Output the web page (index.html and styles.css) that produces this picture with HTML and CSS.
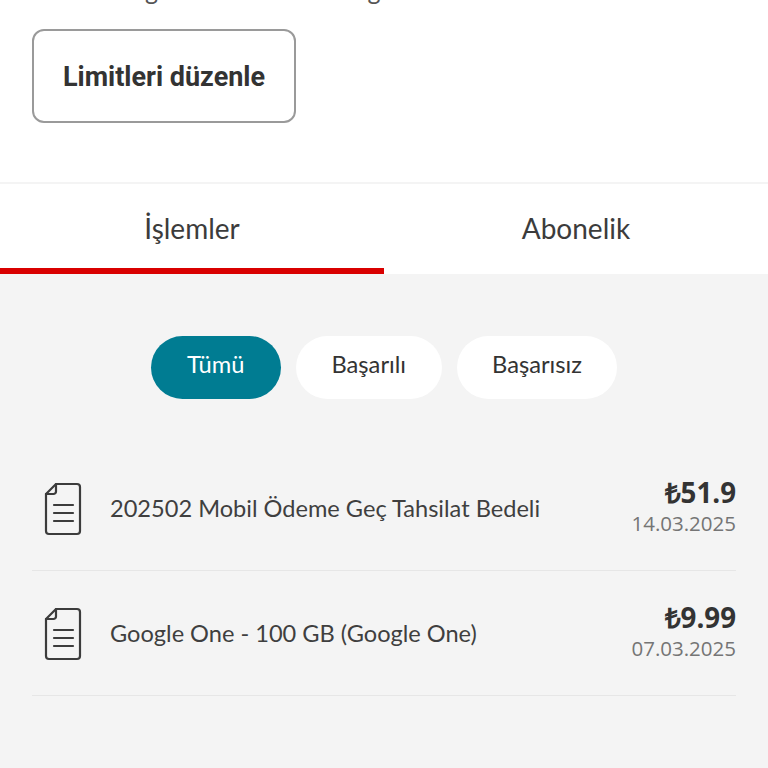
FILE: index.html
```html
<!DOCTYPE html>
<html lang="tr">
<head>
    <meta charset="UTF-8">
    <meta name="viewport" content="width=device-width, initial-scale=1.0">
    <title>Mobil Ödeme</title>
    <link rel="stylesheet" href="styles.css">
</head>
<body>
    <section class="limits">
        <p class="limits-note">Ödeme bilgileriniz ve limitin bilgilerini buradan edinin</p>
        <button class="edit-button" type="button">Limitleri düzenle</button>
    </section>

    <nav class="tabs">
        <div class="tab active">İşlemler</div>
        <div class="tab">Abonelik</div>
    </nav>

    <main class="content">
        <div class="filters">
            <div class="pill selected">Tümü</div>
            <div class="pill">Başarılı</div>
            <div class="pill">Başarısız</div>
        </div>

        <div class="row">
            <svg class="doc-icon" viewBox="0 0 38 54" fill="none" stroke="#3c3c3c" stroke-width="2.2" stroke-linecap="round" stroke-linejoin="round">
                <path d="M12 2H33a3 3 0 0 1 3 3V49a3 3 0 0 1-3 3H5a3 3 0 0 1-3-3V12Z"/>
                <path d="M2 12H9.500a2.500 2.500 0 0 0 2.500-2.500V2"/>
                <path d="M10 23H29M10 31H29M10 39H29"/>
            </svg>
            <div class="row-title">202502 Mobil Ödeme Geç Tahsilat Bedeli</div>
            <div class="row-side">
                <div class="amount">₺51.9</div>
                <div class="date">14.03.2025</div>
            </div>
        </div>

        <div class="row">
            <svg class="doc-icon" viewBox="0 0 38 54" fill="none" stroke="#3c3c3c" stroke-width="2.2" stroke-linecap="round" stroke-linejoin="round">
                <path d="M12 2H33a3 3 0 0 1 3 3V49a3 3 0 0 1-3 3H5a3 3 0 0 1-3-3V12Z"/>
                <path d="M2 12H9.500a2.500 2.500 0 0 0 2.500-2.500V2"/>
                <path d="M10 23H29M10 31H29M10 39H29"/>
            </svg>
            <div class="row-title">Google One - 100 GB (Google One)</div>
            <div class="row-side">
                <div class="amount">₺9.99</div>
                <div class="date">07.03.2025</div>
            </div>
        </div>
    </main>
</body>
</html>
```

FILE: styles.css
```css
html, body {
    margin: 0;
    padding: 0;
}
body {
    width: 768px;
    height: 768px;
    overflow: hidden;
    background-color: #f4f4f4;
    font-family: Lato, "Open Sans", sans-serif;
    color: #333;
}
.limits {
    height: 184px;
    padding: 0 32px;
    box-sizing: border-box;
    background: white;
    border-bottom: 2px solid #f4f4f4;
    overflow: hidden;
}
.limits-note {
    margin: -24px 0 0;
    height: 53px;
    line-height: 28px;
    font-size: 25px;
    color: #555;
    white-space: nowrap;
}
.edit-button {
    display: block;
    width: 264px;
    height: 94px;
    padding: 2px 0 0;
    background: white;
    border: 2px solid #9a9a9a;
    border-radius: 12px;
    font-family: Roboto, sans-serif;
    font-size: 27px;
    font-weight: 700;
    color: #333;
}
.tabs {
    display: flex;
    height: 90px;
    background: white;
}
.tab {
    flex: 1;
    box-sizing: border-box;
    padding-top: 26px;
    text-align: center;
    font-size: 28px;
    line-height: 36px;
    color: #3c3c3c;
}
.tab.active {
    border-bottom: 6px solid #d90000;
}
.content {
    padding: 62px 32px 0;
}
.filters {
    display: flex;
    justify-content: center;
    gap: 15px;
    margin-bottom: 47px;
}
.pill {
    height: 63px;
    padding: 0 35.5px;
    border-radius: 32px;
    background: white;
    line-height: 57px;
    font-size: 23.7px;
    color: #333;
}
.pill.selected {
    padding: 0 36.5px;
    background: #007c92;
    color: white;
}
.row {
    display: flex;
    align-items: center;
    height: 125px;
    box-sizing: border-box;
    border-bottom: 1px solid #e6e6e6;
}
.doc-icon {
    width: 38px;
    height: 54px;
    margin: 2px 28px 0 12px;
    flex-shrink: 0;
}
.row-title {
    flex: 1;
    font-size: 23.6px;
    color: #3f3f3f;
}
.row-side {
    margin-bottom: 2px;
    text-align: right;
}
.amount {
    font-family: "Open Sans", sans-serif;
    font-size: 27.7px;
    line-height: 32px;
    font-weight: 700;
    color: #333;
}
.date {
    font-family: "Open Sans", sans-serif;
    font-size: 20.5px;
    line-height: 30px;
    color: #757575;
}
```
